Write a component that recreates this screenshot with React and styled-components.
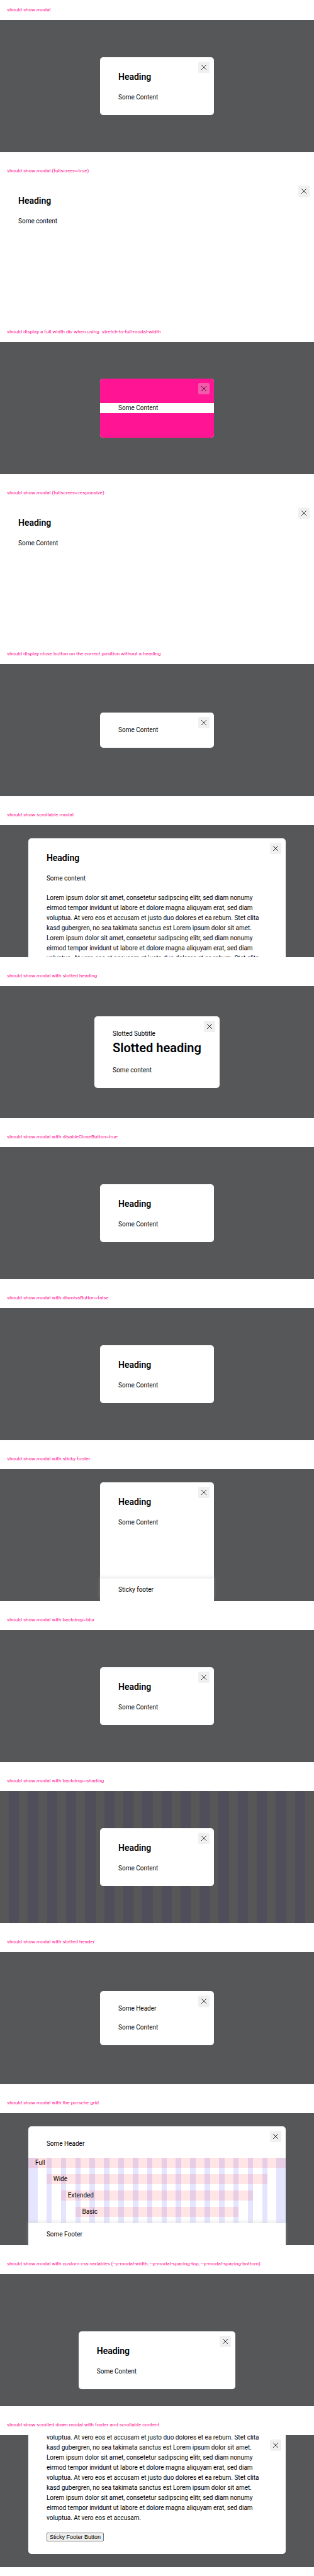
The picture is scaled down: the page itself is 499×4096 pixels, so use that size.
import React from "react";
import styled, { createGlobalStyle, css } from "styled-components";

const GlobalStyle = createGlobalStyle`
  *, *::before, *::after { box-sizing: border-box; }
  body {
    margin: 0;
    background: #fff;
    color: #010205;
    font: 400 10px/16px Roboto, "Liberation Sans", sans-serif;
  }
`;

const Section = styled.section`
  padding-bottom: 14px;
`;

const Label = styled.h2`
  margin: 0;
  padding: 8px 11px;
  font-size: 8px;
  font-weight: 400;
  line-height: 16px;
  color: #ff1493;
`;

const Stage = styled.div`
  position: relative;
  display: flex;
  flex-direction: column;
  align-items: center;
  justify-content: ${({ $align = "center" }) => $align};
  height: 210px;
  padding: ${({ $pad = "0" }) => $pad};
  overflow: hidden;
  background: ${({ $plain }) => ($plain ? "#fff" : "#565759")};
`;

const Dialog = styled.div`
  position: relative;
  display: flex;
  flex-direction: column;
  flex: none;
  gap: 14px;
  width: ${({ $width = "auto" }) => $width};
  min-width: 181px;
  padding: 20px 29px;
  border-radius: 5px;
  background: #fff;
  ${({ $fill }) =>
    $fill &&
    css`
      flex: 1 0 auto;
      padding-bottom: 0;
      border-radius: 5px 5px 0 0;
    `}
  ${({ $fullscreen }) =>
    $fullscreen &&
    css`
      flex: 1 0 auto;
      border-radius: 0;
    `}
`;

const CloseButton = styled.button`
  position: absolute;
  top: 7px;
  right: 7px;
  z-index: 1;
  display: grid;
  place-items: center;
  width: 18px;
  height: 18px;
  padding: 0;
  border: 0;
  border-radius: 2px;
  background: ${({ $tint }) => ($tint ? "#f35aab" : "#f0f0f1")};
`;

const StickyRail = styled.div`
  position: sticky;
  top: 0;
  z-index: 1;
  height: 0;
  margin: -20px -29px -14px;
`;

const Heading = styled.h3`
  margin: 0;
  font-size: 14px;
  font-weight: 600;
  line-height: 22px;
`;

const LargeHeading = styled(Heading)`
  font-size: 20px;
  line-height: 28px;
`;

const Text = styled.p`
  margin: 0;
`;

const Copy = styled.div`
  display: flex;
  flex-direction: column;
  align-items: flex-start;
  gap: 15px;
`;

const Line = styled.span`
  display: block;
  white-space: nowrap;
`;

const FullWidthBand = styled.div`
  margin: -20px -29px;
  padding: 39px 0;
  overflow: hidden;
  border-radius: 5px;
  background: #ff1493;

  p {
    padding: 0 29px;
    background: #fff;
  }
`;

const Footer = styled.footer`
  position: relative;
  margin: auto -29px 0;
  padding: 10px 29px;
  background: #fff;
  box-shadow: 0 -3px 5px rgba(204, 204, 204, 0.35);
`;

const FooterButton = styled.button`
  height: 14px;
  padding: 0 4px;
  border: 1px solid #767676;
  border-radius: 2px;
  background: #efefef;
  color: #000;
  font: 9px/12px "Liberation Sans", sans-serif;
`;

const Stripes = styled.div`
  position: absolute;
  inset: 0;
  display: grid;
  grid-template-columns: repeat(16, 1fr);
  column-gap: 14px;
  padding: 0 14px;
  background: #565756;

  i {
    background: #4f4e5a;
  }
`;

const PageGrid = styled.div`
  display: grid;
  flex: 1;
  grid-template-columns: 46fr repeat(16, 45fr 27fr) 45fr 46fr;
  grid-template-rows: repeat(4, 16px) 1fr;
  row-gap: 10px;
  margin: 0 -29px -14px;
`;

const Gutter = styled.i`
  grid-column: ${({ $line }) => $line};
  grid-row: 1 / -1;
  background: rgba(0, 0, 255, 0.1);
`;

const Span = styled.div`
  grid-column: ${({ $inset }) => `${$inset} / -${$inset}`};
  grid-row: ${({ $row }) => $row};
  padding-left: 11px;
  background: rgba(255, 0, 0, 0.1);
`;

const Close = (props) => (
  <CloseButton type="button" aria-label="Close modal" {...props}>
    <svg width="10" height="10" viewBox="0 0 10 10" fill="none" stroke="#010205" strokeWidth="0.8">
      <path d="M1 1l8 8M9 1l-8 8" />
    </svg>
  </CloseButton>
);

const LOREM = [
  "Lorem ipsum dolor sit amet, consetetur sadipscing elitr, sed diam nonumy",
  "eirmod tempor invidunt ut labore et dolore magna aliquyam erat, sed diam",
  "voluptua. At vero eos et accusam et justo duo dolores et ea rebum. Stet clita",
  "kasd gubergren, no sea takimata sanctus est Lorem ipsum dolor sit amet.",
];

const Lorem = ({ from = 0, count, ending }) => (
  <Text>
    {Array.from({ length: count }, (_, i) => (
      <Line key={i}>{LOREM[(from + i) % LOREM.length]} </Line>
    ))}
    {ending && <Line>{ending}</Line>}
  </Text>
);

const Case = ({ title, children, ...stage }) => (
  <Section>
    <Label>{title}</Label>
    <Stage {...stage}>{children}</Stage>
  </Section>
);

const BasicDialog = ({ content = "Some Content", closable = true, ...rest }) => (
  <Dialog role="dialog" aria-label="Heading" {...rest}>
    {closable && <Close />}
    <Heading>Heading</Heading>
    <Text>{content}</Text>
  </Dialog>
);

export default function App() {
  return (
    <main>
      <GlobalStyle />
      <Case title="should show modal">
        <BasicDialog />
      </Case>
      <Case title="should show modal (fullscreen=true)" $plain>
        <BasicDialog content="Some content" $width="100%" $fullscreen />
      </Case>
      <Case title="should display a full width div when using .stretch-to-full-modal-width">
        <Dialog role="dialog" aria-label="Full width content">
          <Close $tint />
          <FullWidthBand>
            <Text>Some Content</Text>
          </FullWidthBand>
        </Dialog>
      </Case>
      <Case title="should show modal (fullscreen=responsive)" $plain>
        <BasicDialog $width="100%" $fullscreen />
      </Case>
      <Case title="should display close button on the correct position without a heading">
        <Dialog role="dialog" aria-label="Without heading">
          <Close />
          <Text>Some Content</Text>
        </Dialog>
      </Case>
      <Case title="should show scrollable modal" $align="flex-start" $pad="21px 9% 0">
        <Dialog role="dialog" aria-label="Heading" $width="100%">
          <Close />
          <Heading>Heading</Heading>
          <Copy>
            <Text>Some content</Text>
            <Lorem count={7} />
          </Copy>
        </Dialog>
      </Case>
      <Case title="should show modal with slotted heading">
        <Dialog role="dialog" aria-label="Slotted heading">
          <Close />
          <div>
            <Text>Slotted Subtitle</Text>
            <LargeHeading>Slotted heading</LargeHeading>
          </div>
          <Text>Some content</Text>
        </Dialog>
      </Case>
      <Case title="should show modal with disableCloseButton=true">
        <BasicDialog closable={false} />
      </Case>
      <Case title="should show modal with dismissButton=false">
        <BasicDialog closable={false} />
      </Case>
      <Case title="should show modal with sticky footer" $pad="21px 0 0">
        <Dialog role="dialog" aria-label="Heading" $fill>
          <Close />
          <Heading>Heading</Heading>
          <Text>Some Content</Text>
          <Footer>Sticky footer</Footer>
        </Dialog>
      </Case>
      <Case title="should show modal with backdrop=blur">
        <BasicDialog />
      </Case>
      <Case title="should show modal with backdrop=shading">
        <Stripes aria-hidden="true">
          {Array.from({ length: 16 }, (_, i) => (
            <i key={i} />
          ))}
        </Stripes>
        <BasicDialog />
      </Case>
      <Case title="should show modal with slotted header">
        <Dialog role="dialog" aria-label="Some Header">
          <Close />
          <Text>Some Header</Text>
          <Text>Some Content</Text>
        </Dialog>
      </Case>
      <Case title="should show modal with the porsche grid" $pad="21px 9% 0">
        <Dialog role="dialog" aria-label="Some Header" $width="100%" $fill>
          <Close />
          <Text>Some Header</Text>
          <PageGrid>
            <Gutter $line={1} />
            {Array.from({ length: 16 }, (_, i) => (
              <Gutter key={i} $line={i * 2 + 3} />
            ))}
            <Gutter $line={35} />
            <Span $inset={1} $row={1}>Full</Span>
            <Span $inset={3} $row={2}>Wide</Span>
            <Span $inset={5} $row={3}>Extended</Span>
            <Span $inset={7} $row={4}>Basic</Span>
          </PageGrid>
          <Footer>Some Footer</Footer>
        </Dialog>
      </Case>
      <Case
        title="should show modal with custom css variables (--p-modal-width, --p-modal-spacing-top, --p-modal-spacing-bottom)"
        $pad="63px 0 0"
      >
        <BasicDialog $width="50%" />
      </Case>
      <Case
        title="should show scrolled down modal with footer and scrollable content"
        $align="flex-end"
        $pad="0 9% 21px"
      >
        <Dialog role="dialog" aria-label="Scrolled content" $width="100%">
          <StickyRail>
            <Close />
          </StickyRail>
          <Copy>
            <Lorem from={2} count={8} ending="voluptua. At vero eos et accusam." />
            <FooterButton type="button">Sticky Footer Button</FooterButton>
          </Copy>
        </Dialog>
      </Case>
    </main>
  );
}
